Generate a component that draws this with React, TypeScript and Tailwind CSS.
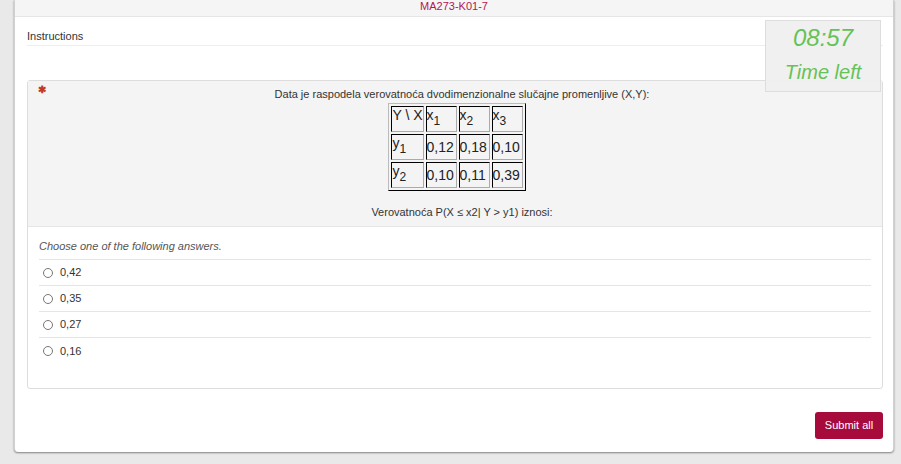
const font = { fontFamily: '"Liberation Sans", Arial, sans-serif' }

const answers = ["0,42", "0,35", "0,27", "0,16"]

function Cell({ children, mid }: { children: React.ReactNode; mid?: boolean }) {
  return (
    <td
      className={`border [border-style:inset] border-t-[#333] border-l-[#333] border-r-[#aaa] border-b-[#aaa] p-0 whitespace-nowrap text-[14px] leading-[16px] text-[#222] h-[26px] min-w-[31px] ${
        mid ? "align-middle" : "align-top"
      }`}
    >
      {children}
    </td>
  )
}

function Sub({ main, sub }: { main: string; sub: string }) {
  return (
    <span className="whitespace-nowrap">
      {main}
      <span className="text-[12px] relative top-[5px]">{sub}</span>
    </span>
  )
}

export default function App() {
  return (
    <div className="w-[901px] h-[464px] overflow-hidden bg-[#e9e9e9] flex" style={font}>
      <div className="w-[14px] shrink-0" />
      <div className="relative w-[880px] h-[452px] bg-white border-l border-r border-[#d0d0d0] rounded-b-[4px] shadow-[0_1px_2px_rgba(0,0,0,0.45)] flex flex-col">
        {/* top strip */}
        <div className="h-[17px] bg-[#f5f5f5] border-b border-[#e6e6e6] flex justify-center overflow-hidden">
          <span className="text-[11px] leading-[12px] text-[#b3174f]">MA273-K01-7</span>
        </div>

        <div className="pl-[12px] pr-[10px] flex flex-col">
          <div className="mt-[12px] h-[17px] border-b border-[#eeeeee] text-[11px] leading-[14px] text-[#333]">
            Instructions
          </div>

          {/* question card */}
          <div className="mt-[34px] border border-[#dddddd] rounded-[3px] flex flex-col">
            <div className="relative bg-[#f4f4f4] border-b border-[#e6e6e6] h-[146px] pl-[14px] flex flex-col items-center">
              <span className="absolute left-[10px] top-[4px] text-[#c0392b] text-[10px] leading-[10px] font-bold">✱</span>
              <p className="mt-[7px] text-[11px] leading-[13px] text-[#333]">
                Data je raspodela verovatnoća dvodimenzionalne slučajne promenljive (X,Y):
              </p>
              <table className="-ml-[10px] mt-[2px] border-separate border-spacing-[2px] border [border-style:outset] border-t-[#bbb] border-l-[#bbb] border-r-[#444] border-b-[#444]">
                <tbody>
                  <tr>
                    <Cell>Y \ X</Cell>
                    <Cell><Sub main="x" sub="1" /></Cell>
                    <Cell><Sub main="x" sub="2" /></Cell>
                    <Cell><Sub main="x" sub="3" /></Cell>
                  </tr>
                  <tr>
                    <Cell><Sub main="y" sub="1" /></Cell>
                    <Cell mid>0,12</Cell>
                    <Cell mid>0,18</Cell>
                    <Cell mid>0,10</Cell>
                  </tr>
                  <tr>
                    <Cell><Sub main="y" sub="2" /></Cell>
                    <Cell mid>0,10</Cell>
                    <Cell mid>0,11</Cell>
                    <Cell mid>0,39</Cell>
                  </tr>
                </tbody>
              </table>
              <p className="mt-[15px] text-[11px] leading-[13px] text-[#333]">
                Verovatnoća P(X ≤ x2| Y &gt; y1) iznosi:
              </p>
            </div>

            <div className="pl-[11px] pr-[11px] pt-[13px] h-[161px]">
              <p className="italic text-[11px] leading-[13px] text-[#555] pb-[6px] border-b border-[#e5e5e5]">
                Choose one of the following answers.
              </p>
              {answers.map((a, i) => (
                <div
                  key={a}
                  className={`h-[26px] flex items-center gap-[7px] pl-[4px] ${i < answers.length - 1 ? "border-b border-[#e5e5e5]" : ""}`}
                >
                  <span className="w-[10px] h-[10px] rounded-full border border-[#777] bg-white" />
                  <span className="text-[11px] text-[#333]">{a}</span>
                </div>
              ))}
            </div>
          </div>

          <div className="mt-[23px] flex justify-end">
            <button className="h-[27px] w-[68px] rounded-[3px] bg-[#a60b3c] text-white text-[11px]">Submit all</button>
          </div>
        </div>

        {/* timer */}
        <div className="absolute left-[750px] top-[20px] w-[116px] h-[72px] bg-[#efefef]/95 border border-[#dddddd] flex flex-col items-center text-[#66c255] italic">
          <span className="mt-[2px] text-[24px] leading-[30px]">08:57</span>
          <span className="mt-[7px] text-[20px] leading-[24px]">Time left</span>
        </div>
      </div>
    </div>
  )
}
